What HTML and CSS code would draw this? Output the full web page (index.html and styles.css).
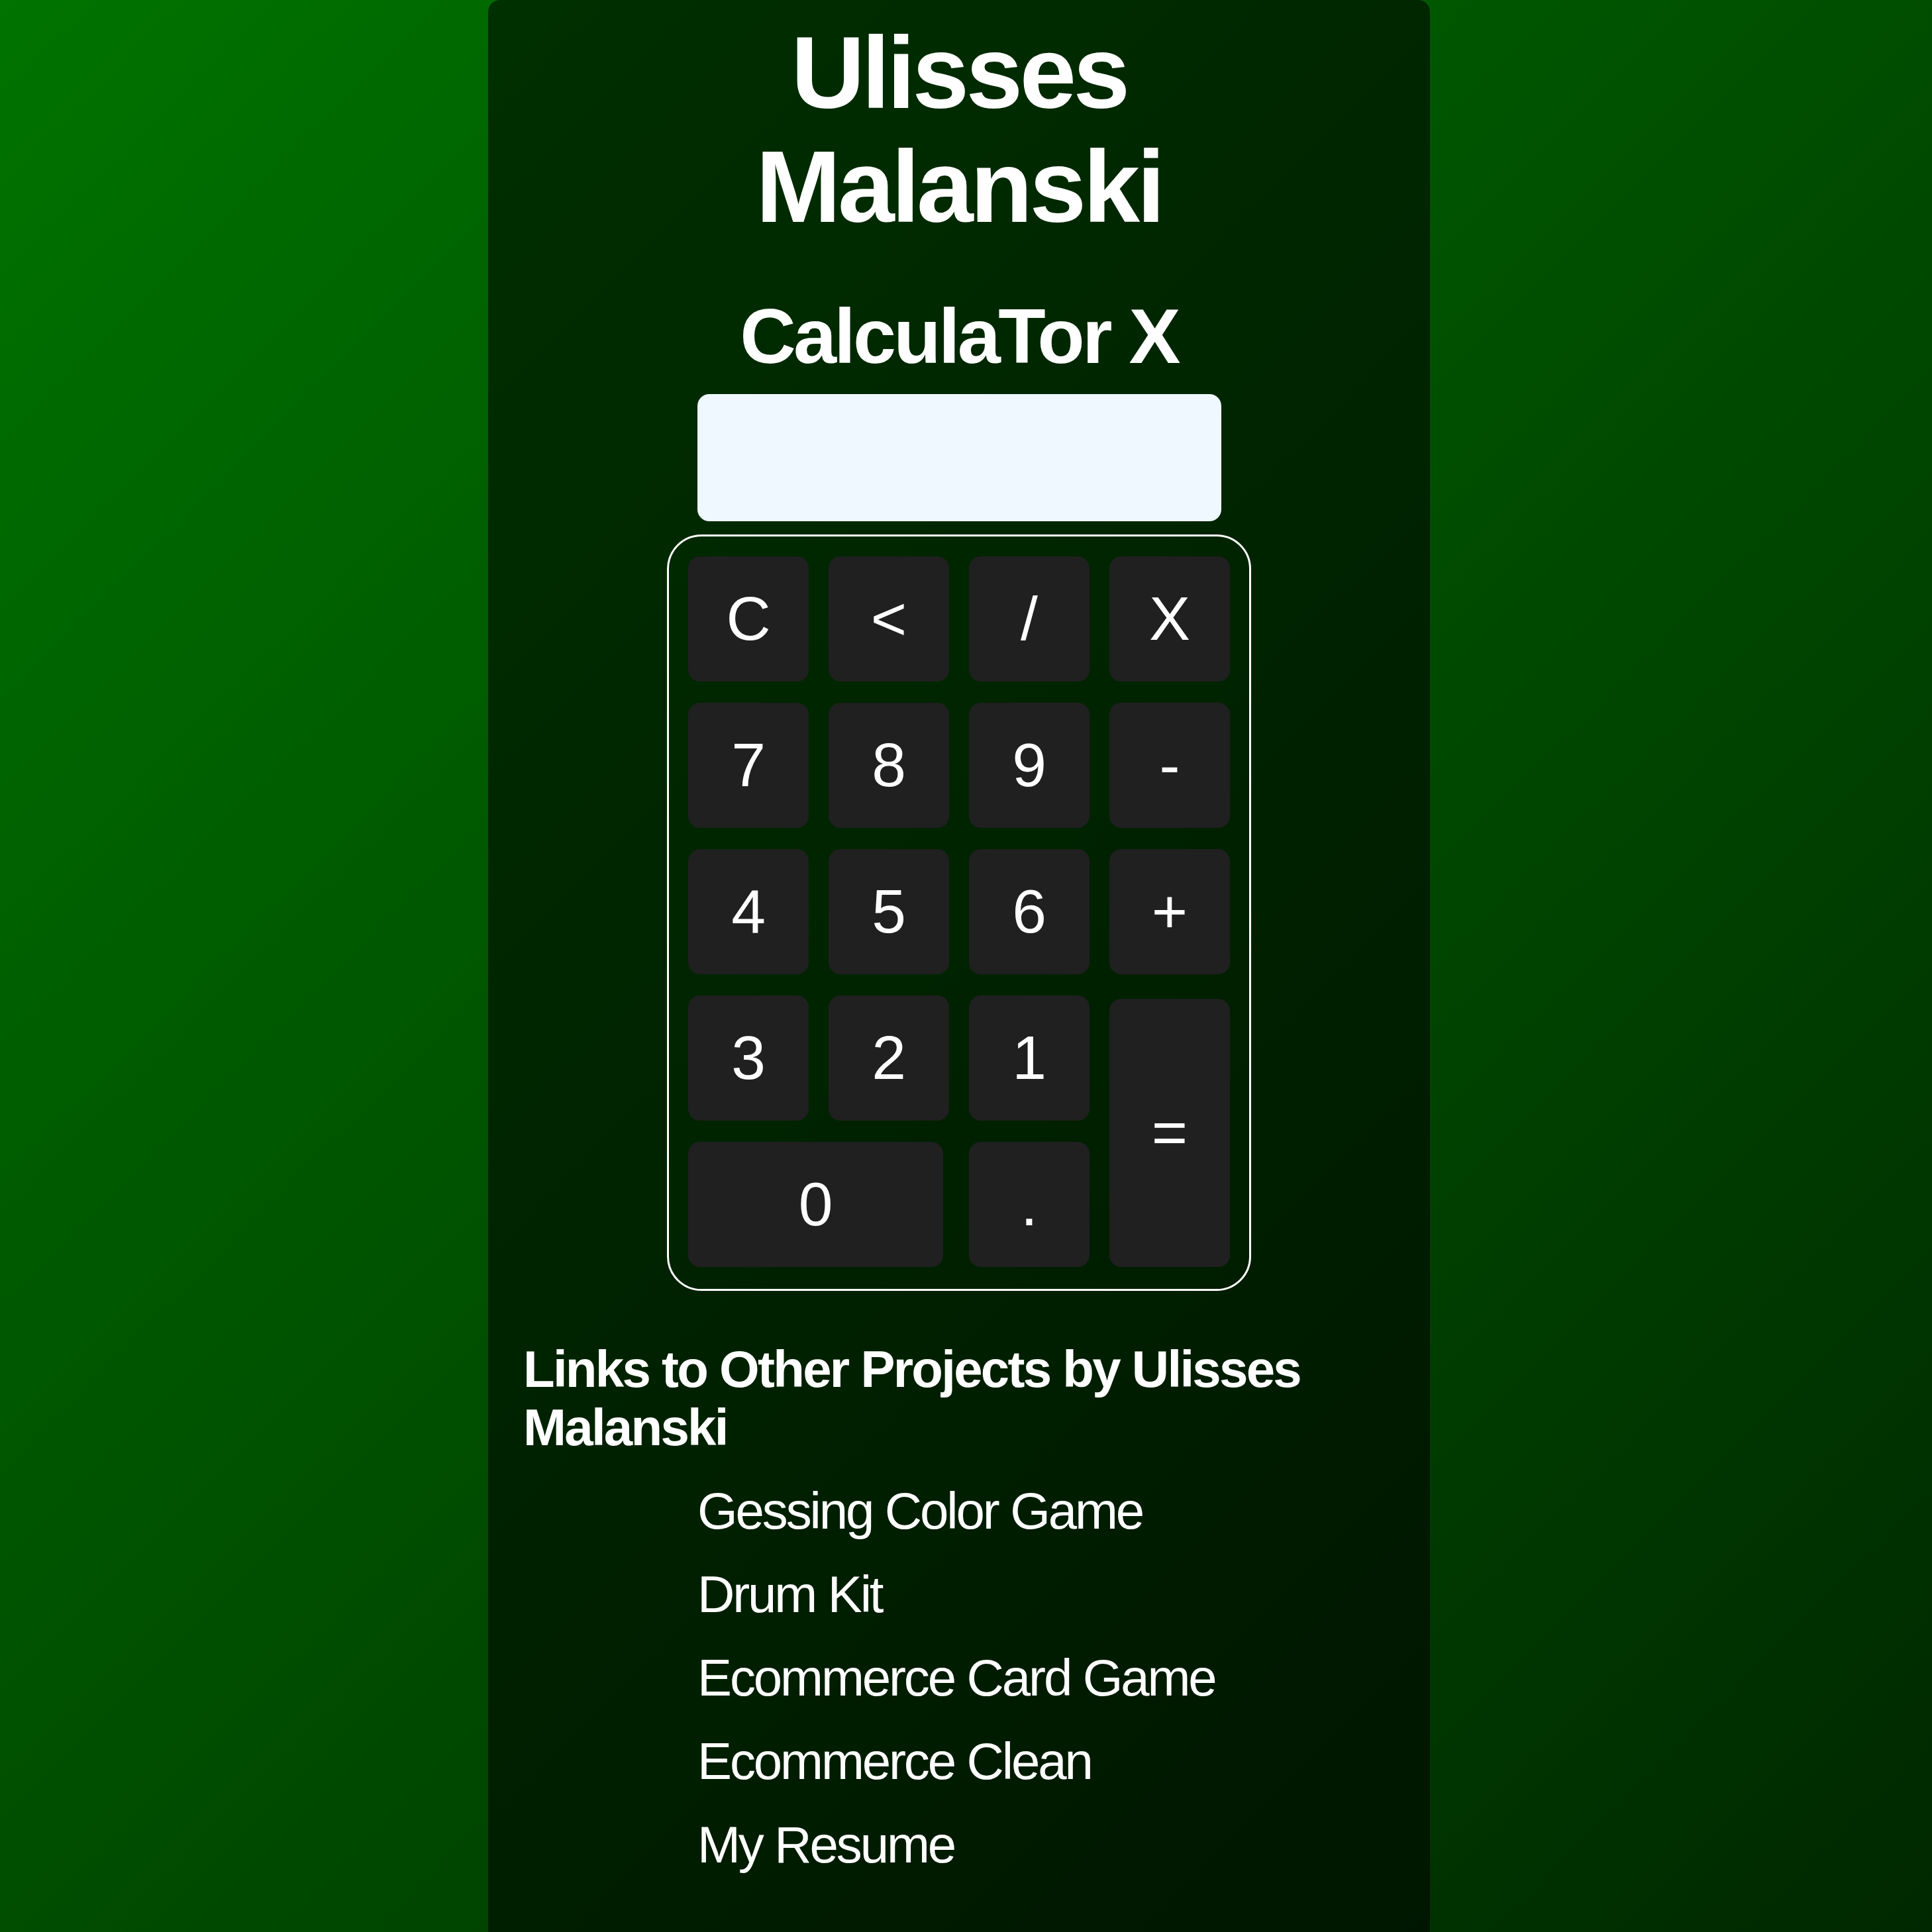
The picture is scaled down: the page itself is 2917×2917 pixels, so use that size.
FILE: index.html
```html
<!DOCTYPE html>
<html lang="en">
<head>
<meta charset="utf-8">
<title>CalculaTor X</title>
<link rel="stylesheet" href="styles.css">
</head>
<body>
  <main class="card">
    <h1 class="title">Ulisses Malanski</h1>
    <h2 class="subtitle">CalculaTor X</h2>
    <input class="display" type="text" readonly>
    <div class="keypad">
      <button class="key">C</button>
      <button class="key">&lt;</button>
      <button class="key">/</button>
      <button class="key">X</button>
      <button class="key">7</button>
      <button class="key">8</button>
      <button class="key">9</button>
      <button class="key">-</button>
      <button class="key">4</button>
      <button class="key">5</button>
      <button class="key">6</button>
      <button class="key">+</button>
      <button class="key">3</button>
      <button class="key">2</button>
      <button class="key">1</button>
      <button class="key key-equals">=</button>
      <button class="key key-zero">0</button>
      <button class="key">.</button>
    </div>
    <section class="links">
      <h4 class="links-title">Links to Other Projects by Ulisses Malanski</h4>
      <ul class="links-list">
        <li><a href="#">Gessing Color Game</a></li>
        <li><a href="#">Drum Kit</a></li>
        <li><a href="#">Ecommerce Card Game</a></li>
        <li><a href="#">Ecommerce Clean</a></li>
        <li><a href="#">My Resume</a></li>
      </ul>
    </section>
  </main>
</body>
</html>
```
FILE: styles.css
```css
html, body {
  height: 100%;
  overflow: hidden;
}

body {
  margin: 0;
  padding-right: 21px;
  background: linear-gradient(to bottom right, #007300, #002800);
  font-family: "Liberation Sans", Arial, sans-serif;
  color: #fff;
}

.card {
  box-sizing: border-box;
  width: 1422px;
  min-height: 2917px;
  margin: 0 auto;
  padding: 24px 53px 0;
  background: rgba(0, 0, 0, 0.55);
  border-radius: 18px 18px 0 0;
}

.title {
  max-width: 1000px;
  margin: 0 auto;
  font-size: 154px;
  line-height: 172px;
  font-weight: bold;
  text-align: center;
  letter-spacing: -0.03em;
}

.subtitle {
  margin: 73px 0 20px;
  font-size: 117px;
  line-height: 134px;
  font-weight: bold;
  text-align: center;
  letter-spacing: -0.032em;
}

.display {
  display: block;
  box-sizing: border-box;
  width: 791px;
  height: 192px;
  margin: 0 auto;
  padding: 0 30px;
  border: 0;
  border-radius: 18px;
  background: #f0f8ff;
  font-family: inherit;
  font-size: 93px;
  outline: none;
}

.keypad {
  box-sizing: border-box;
  width: 882px;
  margin: 20px auto 0;
  padding: 30px 30px 33px 29px;
  border: 3px solid #fff;
  border-radius: 52px;
  display: grid;
  grid-template-columns: repeat(4, 182px);
  grid-auto-rows: 189px;
  gap: 32px 30px;
}

.key {
  border: 0;
  border-radius: 18px;
  background: #202020;
  color: #fff;
  font-family: inherit;
  font-size: 93px;
  padding: 0;
}

.key-equals {
  grid-column: 4;
  grid-row: 4 / span 2;
  margin-top: 5px;
}

.key-zero {
  grid-column: 1 / span 2;
  grid-row: 5;
  width: 385px;
}

.links {
  margin-top: 74px;
}

.links-title {
  margin: 0;
  font-size: 78px;
  line-height: 88px;
  font-weight: bold;
  letter-spacing: -0.035em;
}

.links-list {
  list-style: none;
  margin: 19px 0 0;
  padding-left: 263px;
}

.links-list li {
  font-size: 78px;
  line-height: 126px;
  letter-spacing: -0.04em;
}

.links-list a {
  color: #fff;
  text-decoration: none;
}
```
